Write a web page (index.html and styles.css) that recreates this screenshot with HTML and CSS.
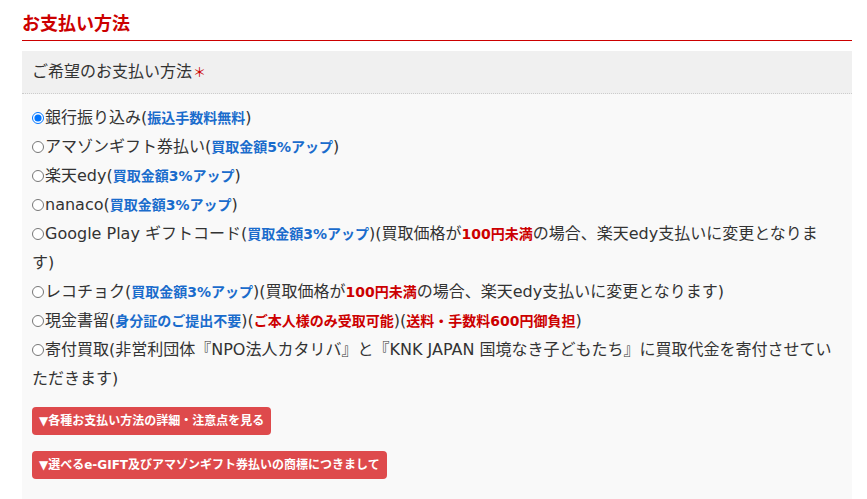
FILE: index.html
```html
<!doctype html>
<html lang="ja">
    <head>
        <meta charset="UTF-8" />
        <title>お支払い方法</title>
        <link rel="stylesheet" href="styles.css">
    </head>
    <body>
        <section class="payment">
            <h2 class="payment-title">お支払い方法</h2>
            <div class="field">
                <div class="field-label">ご希望のお支払い方法<span class="required">＊</span></div>
                <div class="field-body">
                    <ul class="options">
                        <li><label><input type="radio" name="pay" checked>銀行振り込み(<b class="blue">振込手数料無料</b>)</label></li>
                        <li><label><input type="radio" name="pay">アマゾンギフト券払い(<b class="blue">買取金額5%アップ</b>)</label></li>
                        <li><label><input type="radio" name="pay">楽天edy(<b class="blue">買取金額3%アップ</b>)</label></li>
                        <li><label><input type="radio" name="pay">nanaco(<b class="blue">買取金額3%アップ</b>)</label></li>
                        <li><label><input type="radio" name="pay">Google Play ギフトコード(<b class="blue">買取金額3%アップ</b>)(買取価格が<b class="red">100円未満</b>の場合、楽天edy支払いに変更となります)</label></li>
                        <li><label><input type="radio" name="pay">レコチョク(<b class="blue">買取金額3%アップ</b>)(買取価格が<b class="red">100円未満</b>の場合、楽天edy支払いに変更となります)</label></li>
                        <li><label><input type="radio" name="pay">現金書留(<b class="blue">身分証のご提出不要</b>)(<b class="red">ご本人様のみ受取可能</b>)(<b class="red">送料・手数料600円御負担</b>)</label></li>
                        <li><label><input type="radio" name="pay">寄付買取(非営利団体『NPO法人カタリバ』と『KNK JAPAN 国境なき子どもたち』に買取代金を寄付させていただきます)</label></li>
                    </ul>
                    <div class="notes">
                        <button class="note-btn" type="button">▼各種お支払い方法の詳細・注意点を見る</button>
                        <button class="note-btn" type="button">▼選べるe-GIFT及びアマゾンギフト券払いの商標につきまして</button>
                    </div>
                </div>
            </div>
        </section>
    </body>
</html>
```

FILE: styles.css
```css
:root {
    --site-red: #cc0000;
    --site-blue: #1a6ccc;
    --site-text: #333333;
    --btn-red: #de4a4c;
}

* {
    margin: 0;
    padding: 0;
    box-sizing: border-box;
}

body {
    font-family: "DejaVu Sans", "Noto Sans CJK JP", sans-serif;
    color: var(--site-text);
    background: #ffffff;
}

.payment {
    width: 830px;
    margin-left: 22px;
    padding-top: 9px;
}

.payment-title {
    font-family: "Noto Sans CJK JP", sans-serif;
    font-size: 18px;
    line-height: 26px;
    font-weight: bold;
    color: var(--site-red);
    padding-bottom: 5px;
    border-bottom: 1px solid var(--site-red);
}

.field {
    margin-top: 10px;
}

.field-label {
    background: #f0f0f0;
    border-bottom: 1px dotted #cccccc;
    padding: 10px 10px;
    font-size: 16px;
    line-height: 22px;
    height: 43px;
}

.required {
    color: var(--site-red);
    font-size: 13px;
    margin-left: 1px;
}

.field-body {
    background: #f9f9f9;
    padding: 9px 18px 20px 10px;
}

.options {
    list-style: none;
}

.options li {
    font-size: 16px;
    line-height: 29px;
}

.options input {
    width: 12px;
    height: 12px;
    margin: 0 1px 0 0;
    vertical-align: -1px;
}

.blue,
.red {
    font-size: 14px;
    line-height: 18px;
}

.blue {
    color: var(--site-blue);
}

.red {
    color: var(--site-red);
}

.notes {
    display: flex;
    flex-direction: column;
    align-items: flex-start;
    gap: 16px;
    margin-top: 14px;
}

.note-btn {
    font-family: inherit;
    font-size: 12px;
    font-weight: bold;
    line-height: 16px;
    height: 28px;
    color: #ffffff;
    background: var(--btn-red);
    border: none;
    border-radius: 4px;
    padding: 6px 7px;
}
```
